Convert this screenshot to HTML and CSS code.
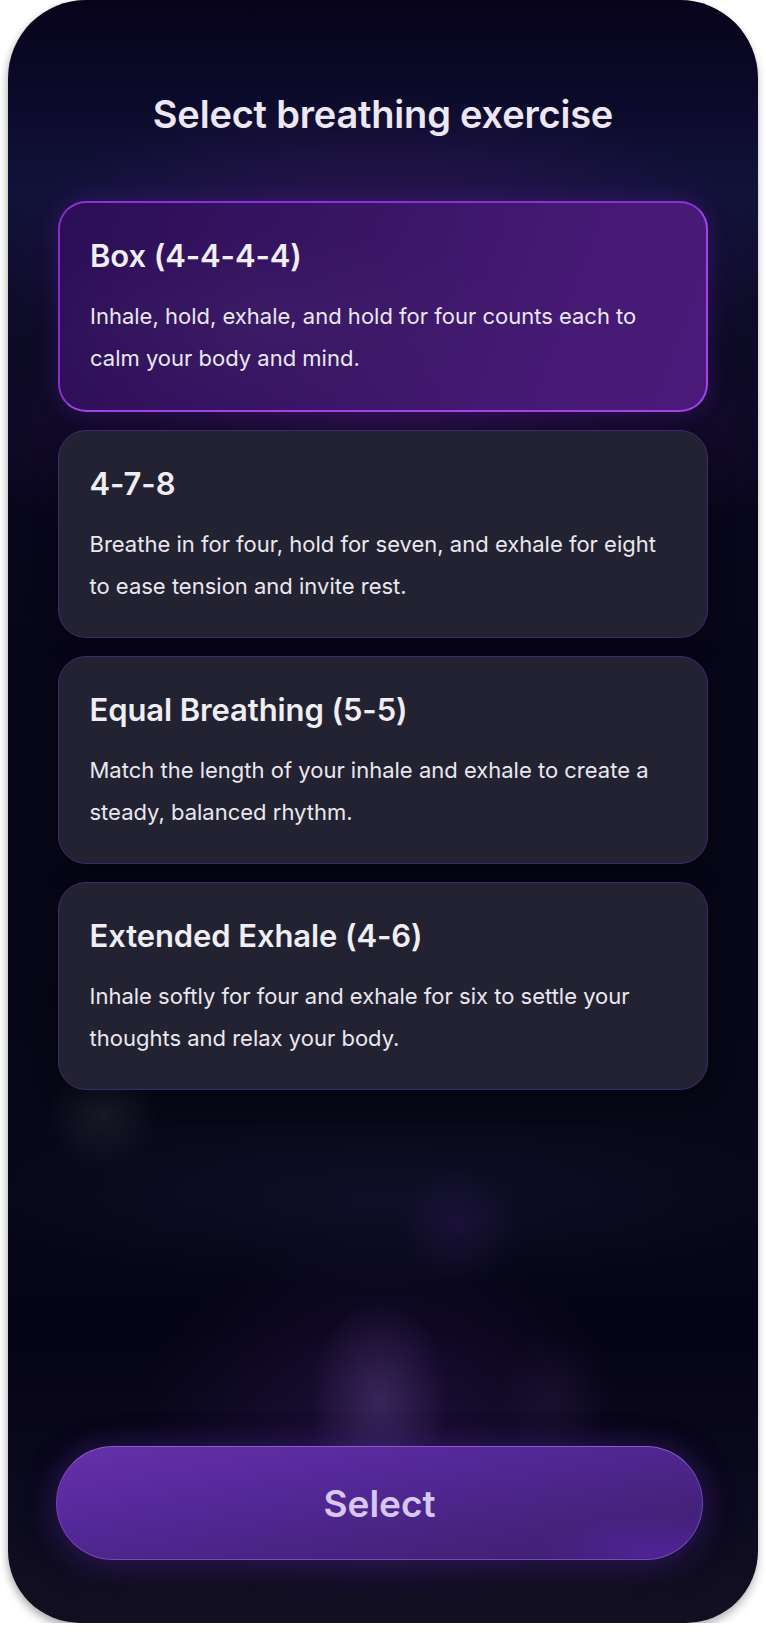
FILE: index.html
```html
<!DOCTYPE html>
<html lang="en">
<head>
<meta charset="utf-8">
<title>Select breathing exercise</title>
<link rel="stylesheet" href="styles.css">
</head>
<body>
<div class="phone">
  <h1 class="title">Select breathing exercise</h1>
  <div class="list">
    <div class="card card--selected">
      <h2 class="card__title">Box (4-4-4-4)</h2>
      <p class="card__desc">Inhale, hold, exhale, and hold for four counts each to calm your body and mind.</p>
    </div>
    <div class="card">
      <h2 class="card__title">4-7-8</h2>
      <p class="card__desc">Breathe in for four, hold for seven, and exhale for eight to ease tension and invite rest.</p>
    </div>
    <div class="card">
      <h2 class="card__title">Equal Breathing (5-5)</h2>
      <p class="card__desc">Match the length of your inhale and exhale to create a steady, balanced rhythm.</p>
    </div>
    <div class="card">
      <h2 class="card__title">Extended Exhale (4-6)</h2>
      <p class="card__desc">Inhale softly for four and exhale for six to settle your thoughts and relax your body.</p>
    </div>
  </div>
  <div class="spacer"></div>
  <button class="select-btn">Select</button>
</div>
</body>
</html>
```

FILE: styles.css
```css
* { box-sizing: border-box; }
html, body { margin: 0; padding: 0; background: #ffffff; }
body { font-family: Inter, "Noto Sans", "Liberation Sans", sans-serif; }

.phone {
  margin-left: 8px;
  width: 750px;
  height: 1623px;
  border-radius: 78px 78px 72px 72px;
  overflow: hidden;
  display: flex;
  flex-direction: column;
  box-shadow: 0 6px 10px rgba(0,0,0,0.22), -2px 2px 6px rgba(0,0,0,0.12);
  background:
    radial-gradient(ellipse 70px 100px at 371px 1400px, rgba(95,65,135,0.45), rgba(60,30,100,0) 100%),
    radial-gradient(ellipse 240px 190px at 375px 1420px, rgba(70,30,120,0.32), rgba(40,20,80,0) 100%),
    radial-gradient(ellipse 55px 65px at 545px 1400px, rgba(60,40,90,0.22), rgba(40,20,80,0) 100%),
    radial-gradient(ellipse 55px 55px at 95px 1115px, rgba(40,42,56,0.5), rgba(30,30,40,0) 100%),
    radial-gradient(ellipse 60px 55px at 450px 1225px, rgba(50,25,90,0.4), rgba(30,20,60,0) 100%),
    radial-gradient(ellipse 420px 90px at 380px 1200px, rgba(20,20,50,0.6), rgba(10,10,30,0) 100%),
    radial-gradient(ellipse 380px 170px at 375px 260px, rgba(70,25,110,0.55), rgba(40,15,80,0) 100%),
    radial-gradient(ellipse 430px 140px at 375px 440px, rgba(60,20,95,0.55), rgba(40,15,80,0) 100%),
    linear-gradient(180deg, #07041a 0px, #0c0b2c 110px, #12123a 190px, #0f0c2a 300px, #08061a 520px, #060616 1000px, #070918 1150px, #050414 1330px, #0c0a1e 1500px, #121020 1623px);
}

.title {
  margin: 0;
  padding-top: 91px;
  text-align: center;
  font-size: 38px;
  line-height: 46px;
  font-weight: 600;
  color: #ece8f2;
  letter-spacing: -0.2px;
}

.list {
  margin-top: 64px;
  padding: 0 50px;
  display: flex;
  flex-direction: column;
  gap: 18px;
}

.card {
  border: 1.5px solid #3f2a72;
  border-radius: 28px;
  background: #232232;
  padding: 34.5px 30px 30.5px 30.5px;
  box-shadow: 0 6px 24px rgba(0,0,0,0.35);
}

.card--selected {
  border: 2px solid #a443ea;
  border-top-color: #8a32d6;
  border-left-color: #8230d0;
  padding: 35px 30px 31px 30px;
  background:
    radial-gradient(ellipse 260px 90px at 200px 120px, rgba(70,40,110,0.35), rgba(70,40,110,0) 100%),
    linear-gradient(110deg, #2b0e55 0%, #3a1566 45%, #461a74 75%, #4a1a7a 100%);
  box-shadow: 0 0 22px rgba(120,40,200,0.25);
}

.card__title {
  margin: 0;
  font-size: 31px;
  line-height: 36px;
  font-weight: 600;
  color: #efeef3;
  letter-spacing: -0.1px;
}

.card__desc {
  margin: 21px 0 0;
  font-size: 22px;
  line-height: 42px;
  font-weight: 400;
  color: #e9e8ee;
}

.spacer { flex: 1; }

.select-btn {
  margin: 0 0 63px 48px;
  width: 647px;
  height: 114px;
  align-self: flex-start;
  border-radius: 57px;
  border: 1.5px solid #7449b8;
  border-top-color: #8a5cc8;
  background:
    radial-gradient(ellipse 120px 40px at 600px 105px, rgba(85,35,160,0.8), rgba(85,35,160,0) 100%),
    linear-gradient(170deg, #6631a9 0%, #55289a 35%, #47237f 70%, #3c1f6c 100%);
  box-shadow: 0 0 30px rgba(90,40,170,0.35), 0 10px 40px rgba(60,30,120,0.25);
  font-family: Inter, "Noto Sans", "Liberation Sans", sans-serif;
  font-size: 37px;
  font-weight: 600;
  color: #d7c6ee;
  cursor: pointer;
}
```
